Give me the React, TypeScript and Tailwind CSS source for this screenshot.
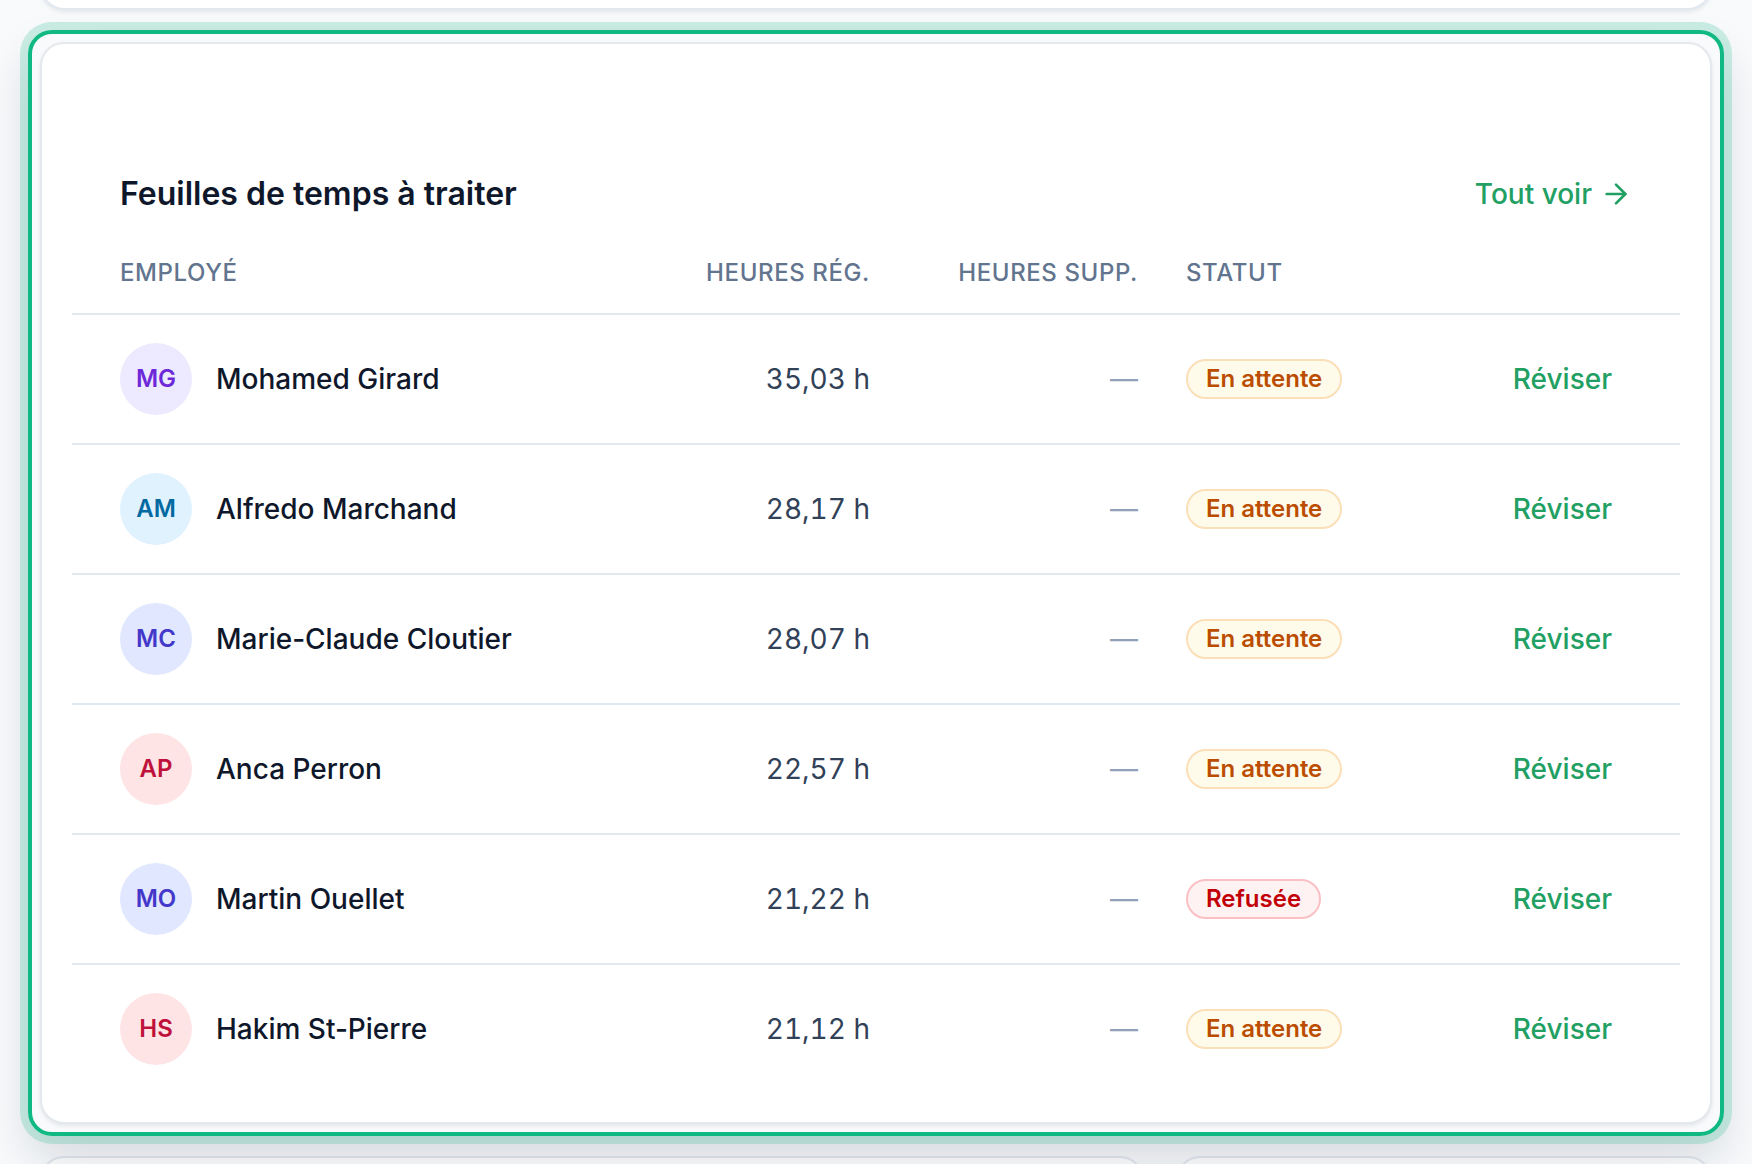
import { ArrowRight } from "lucide-react";

type Status = "pending" | "rejected";

interface Timesheet {
  initials: string;
  name: string;
  hours: string;
  status: Status;
  avatar: string;
}

const timesheets: Timesheet[] = [
  { initials: "MG", name: "Mohamed Girard", hours: "35,03 h", status: "pending", avatar: "bg-[#ede9fe] text-[#6d28d9]" },
  { initials: "AM", name: "Alfredo Marchand", hours: "28,17 h", status: "pending", avatar: "bg-[#e0f2fe] text-[#0369a1]" },
  { initials: "MC", name: "Marie-Claude Cloutier", hours: "28,07 h", status: "pending", avatar: "bg-[#e0e7ff] text-[#4338ca]" },
  { initials: "AP", name: "Anca Perron", hours: "22,57 h", status: "pending", avatar: "bg-[#ffe4e6] text-[#be123c]" },
  { initials: "MO", name: "Martin Ouellet", hours: "21,22 h", status: "rejected", avatar: "bg-[#e0e7ff] text-[#4338ca]" },
  { initials: "HS", name: "Hakim St-Pierre", hours: "21,12 h", status: "pending", avatar: "bg-[#ffe4e6] text-[#be123c]" },
];

const statusLabels: Record<Status, string> = {
  pending: "En attente",
  rejected: "Refusée",
};

const statusStyles: Record<Status, string> = {
  pending: "bg-[#fffbeb] border-[#fbdfb8] text-[#bb4d00]",
  rejected: "bg-[#fef2f2] border-[#fbc0c4] text-[#c10007]",
};

function StatusBadge({ status }: { status: Status }) {
  return (
    <span
      className={`inline-flex h-10 items-center rounded-full border-2 px-[18px] text-2xl font-semibold ${statusStyles[status]}`}
    >
      {statusLabels[status]}
    </span>
  );
}

function TimesheetTable() {
  return (
    <table className="mt-2 w-full table-fixed text-[28px] leading-10">
      <colgroup>
        <col className="w-[34%]" />
        <col />
        <col className="w-[268px]" />
        <col className="w-[206px]" />
        <col className="w-[312px]" />
      </colgroup>
      <thead>
        <tr className="h-[82px] border-b-2 border-slate-200 text-2xl tracking-wide text-slate-500 uppercase">
          <th scope="col" className="pr-6 pl-12 text-left font-medium">Employé</th>
          <th scope="col" className="px-6 text-right font-medium">Heures rég.</th>
          <th scope="col" className="px-6 text-right font-medium">Heures supp.</th>
          <th scope="col" className="px-6 text-left font-medium">Statut</th>
          <th scope="col" aria-label="Actions" />
        </tr>
      </thead>
      <tbody>
        {timesheets.map((row) => (
          <tr key={row.initials} className="h-[130px] border-b-2 border-slate-200 last:h-32 last:border-b-0">
            <td className="pr-6 pl-12">
              <div className="flex items-center gap-6">
                <span
                  className={`flex size-[72px] shrink-0 items-center justify-center rounded-full text-2xl font-semibold ${row.avatar}`}
                >
                  {row.initials}
                </span>
                <span className="font-medium whitespace-nowrap text-slate-900">{row.name}</span>
              </div>
            </td>
            <td className="px-6 text-right text-slate-700 tabular-nums">{row.hours}</td>
            <td className="px-6 text-right text-slate-400">—</td>
            <td className="px-6">
              <div className="flex">
                <StatusBadge status={row.status} />
              </div>
            </td>
            <td className="pr-12 text-right">
              <button type="button" className="px-5 font-medium text-[#22a063]">
                Réviser
              </button>
            </td>
          </tr>
        ))}
      </tbody>
    </table>
  );
}

export default function App() {
  return (
    <div className="h-screen overflow-hidden bg-[#f8fafc] px-7 font-['Inter',sans-serif]">
      {/* previous card, mostly scrolled out of view */}
      <div className="mx-3 -mt-[86px] h-24 rounded-3xl border-2 border-slate-200 bg-white shadow-[0_2px_4px_rgba(15,23,42,0.08)]" />

      {/* highlight frame */}
      <div className="relative z-10 mt-5 rounded-3xl border-4 border-[#10b981] p-2 shadow-[0_0_0_8px_rgba(16,185,129,0.2),0_24px_48px_rgba(15,23,42,0.14)]">
        <section className="rounded-3xl border-2 border-[#e5e8ec] bg-white px-[30px] pt-[120px] pb-[30px] shadow-[0_2px_4px_rgba(15,23,42,0.08)]">
          <div className="flex items-center justify-between px-12">
            <h2 className="text-[32px] leading-[60px] font-semibold text-slate-900">
              Feuilles de temps à traiter
            </h2>
            <a href="#timesheets" className="flex items-center gap-2 text-[28px] font-medium text-[#22a063]">
              Tout voir
              <ArrowRight className="size-8" />
            </a>
          </div>
          <TimesheetTable />
        </section>
      </div>

      <div className="mx-3 mt-5 grid grid-cols-3 gap-8">
        <div className="col-span-2 h-24 rounded-3xl border-2 border-slate-200 bg-white" />
        <div className="h-24 rounded-3xl border-2 border-slate-200 bg-white" />
      </div>
    </div>
  );
}
